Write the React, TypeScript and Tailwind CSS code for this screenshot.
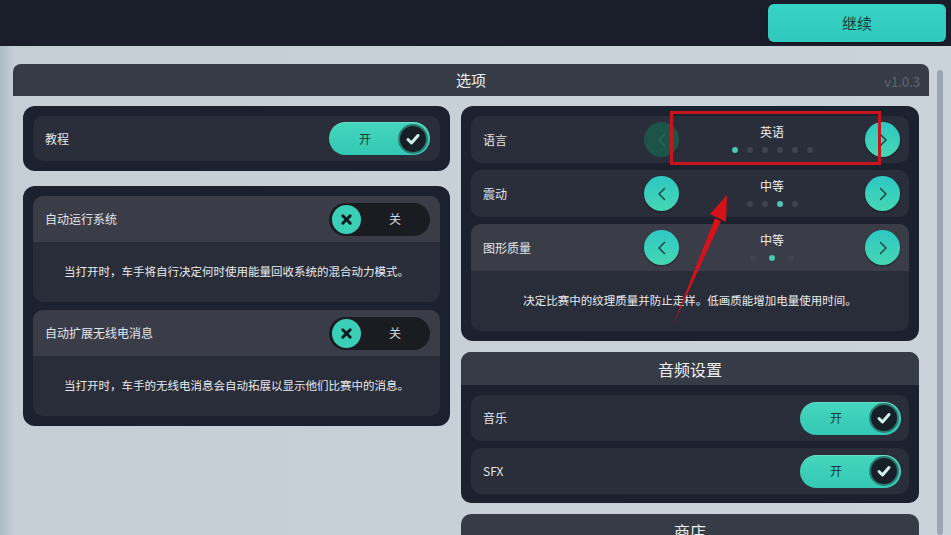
import React from 'react';

const font = "font-['Noto_Sans_CJK_SC','Noto_Sans',sans-serif]";

function OnToggle() {
  return (
    <div className="flex h-[33px] w-[101px] items-center justify-between rounded-full bg-[linear-gradient(to_bottom,#45d6bd,#33c8b4)] pl-[30px] pr-[2px] shadow-[inset_0_1px_0_rgba(255,255,255,0.2)]">
      <span className="text-[12px] text-[#173b37]">开</span>
      <span className="flex h-[30px] w-[30px] items-center justify-center rounded-full border-2 border-[#2a7c70] bg-[#172029]">
        <svg width="16" height="16" viewBox="0 0 16 16" fill="none">
          <path d="M3 8.5 L6.5 12 L13 4.5" stroke="#d3f1ec" strokeWidth="3" strokeLinecap="round" strokeLinejoin="round" />
        </svg>
      </span>
    </div>
  );
}

function OffToggle() {
  return (
    <div className="flex h-[33px] w-[101px] items-center rounded-full bg-[#1b1c21] pl-[3px]">
      <span className="flex h-[29px] w-[29px] items-center justify-center rounded-full bg-[#3ccfb8]">
        <svg width="13" height="13" viewBox="0 0 14 14" fill="none">
          <path d="M3 3 L11 11 M11 3 L3 11" stroke="#0f1a1d" strokeWidth="3.2" strokeLinecap="round" />
        </svg>
      </span>
      <span className="ml-[28px] text-[12px] text-[#d7dade]">关</span>
    </div>
  );
}

function ArrowBtn({ dir, disabled }: { dir: 'l' | 'r'; disabled?: boolean }) {
  return (
    <span
      className={
        disabled
          ? 'flex h-[35px] w-[35px] items-center justify-center rounded-full bg-[#1d5449]'
          : 'flex h-[35px] w-[35px] items-center justify-center rounded-full bg-[linear-gradient(to_bottom,#2ec8c3,#45d7b3)] shadow-[0_1px_2px_rgba(0,0,0,0.4)]'
      }
    >
      <svg width="12" height="14" viewBox="0 0 12 14" fill="none">
        <path
          d={dir === 'l' ? 'M8.5 1.5 L3 7 L8.5 12.5' : 'M3.5 1.5 L9 7 L3.5 12.5'}
          stroke={disabled ? '#2a6a5d' : '#1a3b3a'}
          strokeWidth="1.4"
          strokeLinecap="round"
          strokeLinejoin="round"
        />
      </svg>
    </span>
  );
}

function Dots({ count, active, gap }: { count: number; active: number; gap: string }) {
  return (
    <div className={`flex ${gap}`}>
      {Array.from({ length: count }).map((_, i) => (
        <span key={i} className={i === active ? 'h-[6px] w-[6px] rounded-full bg-[#4cc7b3]' : 'h-[6px] w-[6px] rounded-full bg-[#3f4452]'} />
      ))}
    </div>
  );
}

function Selector({ value, count, active, gap, disabledLeft }: { value: string; count: number; active: number; gap: string; disabledLeft?: boolean }) {
  return (
    <div className="flex items-center">
      <ArrowBtn dir="l" disabled={disabledLeft} />
      <div className="flex w-[186px] flex-col items-center gap-[7px] pb-[2px]">
        <span className="text-[12px] leading-[16px] text-[#eef0f2]">{value}</span>
        <Dots count={count} active={active} gap={gap} />
      </div>
      <ArrowBtn dir="r" />
    </div>
  );
}

export default function App() {
  return (
    <div className={`relative h-[535px] w-[951px] overflow-hidden bg-[#c9d3d9] ${font}`}>
      <div className="flex h-[46px] items-start justify-end bg-[#1a1e2b] pr-[5px] pt-[4px]">
        <button className="h-[38px] w-[178px] rounded-[6px] bg-[linear-gradient(to_bottom,#37d3c6,#30c9bb)] text-[15px] text-[#17403c] shadow-[0_1px_2px_rgba(0,0,0,0.4)]">
          继续
        </button>
      </div>

      <div className="flex h-[489px] bg-[linear-gradient(to_right,#acbac2,#c4ced4_13px,#cad3d9)]">
        <div className="ml-[13px] mt-[18px] w-[916px]">
          <div className="relative flex h-[32px] items-center justify-center rounded-t-[8px] bg-[#363c45]">
            <span className="text-[15px] text-[#eceef0]">选项</span>
            <span className="absolute right-[9px] top-[8px] text-[13px] text-[#5f6670]">v1.0.3</span>
          </div>

          <div className="flex gap-[11px] px-[10px] pt-[10px]">
            {/* left column */}
            <div className="flex w-[427px] flex-col gap-[15px]">
              <div className="rounded-[12px] bg-[#1c2130] p-[10px]">
                <div className="flex h-[45px] items-center justify-between rounded-[10px] bg-[#2a2e3a] pl-[12px] pr-[10px]">
                  <span className="text-[12px] text-[#e3e5e8]">教程</span>
                  <OnToggle />
                </div>
              </div>

              <div className="flex flex-col gap-[8px] rounded-[12px] bg-[#1c2130] p-[10px]">
                {[
                  ['自动运行系统', '当打开时，车手将自行决定何时使用能量回收系统的混合动力模式。'],
                  ['自动扩展无线电消息', '当打开时，车手的无线电消息会自动拓展以显示他们比赛中的消息。'],
                ].map(([label, desc]) => (
                  <div key={label} className="overflow-hidden rounded-[10px] bg-[#292d39]">
                    <div className="flex h-[46px] items-center justify-between bg-[#3a3d48] pl-[12px] pr-[10px]">
                      <span className="text-[12px] text-[#e3e5e8]">{label}</span>
                      <OffToggle />
                    </div>
                    <div className="flex h-[60px] items-center justify-center text-[11.5px] text-[#e8eaec]">{desc}</div>
                  </div>
                ))}
              </div>
            </div>

            {/* right column */}
            <div className="flex w-[458px] flex-col gap-[11px]">
              <div className="flex flex-col gap-[7px] rounded-[12px] bg-[#1c2130] p-[10px]">
                <div className="flex h-[47px] items-center justify-between rounded-[10px] bg-[#2a2e3a] pl-[12px] pr-[9px]">
                  <span className="text-[12px] text-[#e3e5e8]">语言</span>
                  <Selector value="英语" count={6} active={0} gap="gap-[9px]" disabledLeft />
                </div>
                <div className="flex h-[47px] items-center justify-between rounded-[10px] bg-[#2a2e3a] pl-[12px] pr-[9px]">
                  <span className="text-[12px] text-[#e3e5e8]">震动</span>
                  <Selector value="中等" count={4} active={2} gap="gap-[9px]" />
                </div>
                <div className="overflow-hidden rounded-[10px] bg-[#292d39]">
                  <div className="flex h-[47px] items-center justify-between bg-[#3a3d48] pl-[12px] pr-[9px]">
                    <span className="text-[12px] text-[#e3e5e8]">图形质量</span>
                    <Selector value="中等" count={3} active={1} gap="gap-[13px]" />
                  </div>
                  <div className="flex h-[60px] items-center justify-center text-[11.5px] text-[#e8eaec]">
                    决定比赛中的纹理质量并防止走样。低画质能增加电量使用时间。
                  </div>
                </div>
              </div>

              <div className="overflow-hidden rounded-[10px] bg-[#1c2130]">
                <div className="flex h-[33px] items-center justify-center bg-[#363c45] text-[16px] text-[#eceef0]">音频设置</div>
                <div className="flex flex-col gap-[7px] px-[10px] pb-[9px] pt-[10px]">
                  {['音乐', 'SFX'].map((l) => (
                    <div key={l} className="flex h-[46px] items-center justify-between rounded-[10px] bg-[#2a2e3a] pl-[12px] pr-[8px]">
                      <span className="text-[12px] text-[#e3e5e8]">{l}</span>
                      <OnToggle />
                    </div>
                  ))}
                </div>
              </div>

              <div className="rounded-t-[10px] bg-[#363c45]">
                <div className="flex h-[33px] items-center justify-center text-[16px] text-[#eceef0]">商店</div>
              </div>
            </div>
          </div>
        </div>
        <div className="ml-[8px] mt-[24px] w-[6px] rounded-full bg-[#9ba6b1]" />
      </div>

      {/* red annotation */}
      <div className="absolute left-[670px] top-[111px] h-[54px] w-[211px] border-[3px] border-[#c8141b]" />
      <svg className="absolute left-0 top-0" width="951" height="535" viewBox="0 0 951 535">
        <polygon points="673,325 715,218 721,221" fill="#d3121a" />
        <polygon points="727,195 710,214 726,222" fill="#d3121a" />
      </svg>
    </div>
  );
}
